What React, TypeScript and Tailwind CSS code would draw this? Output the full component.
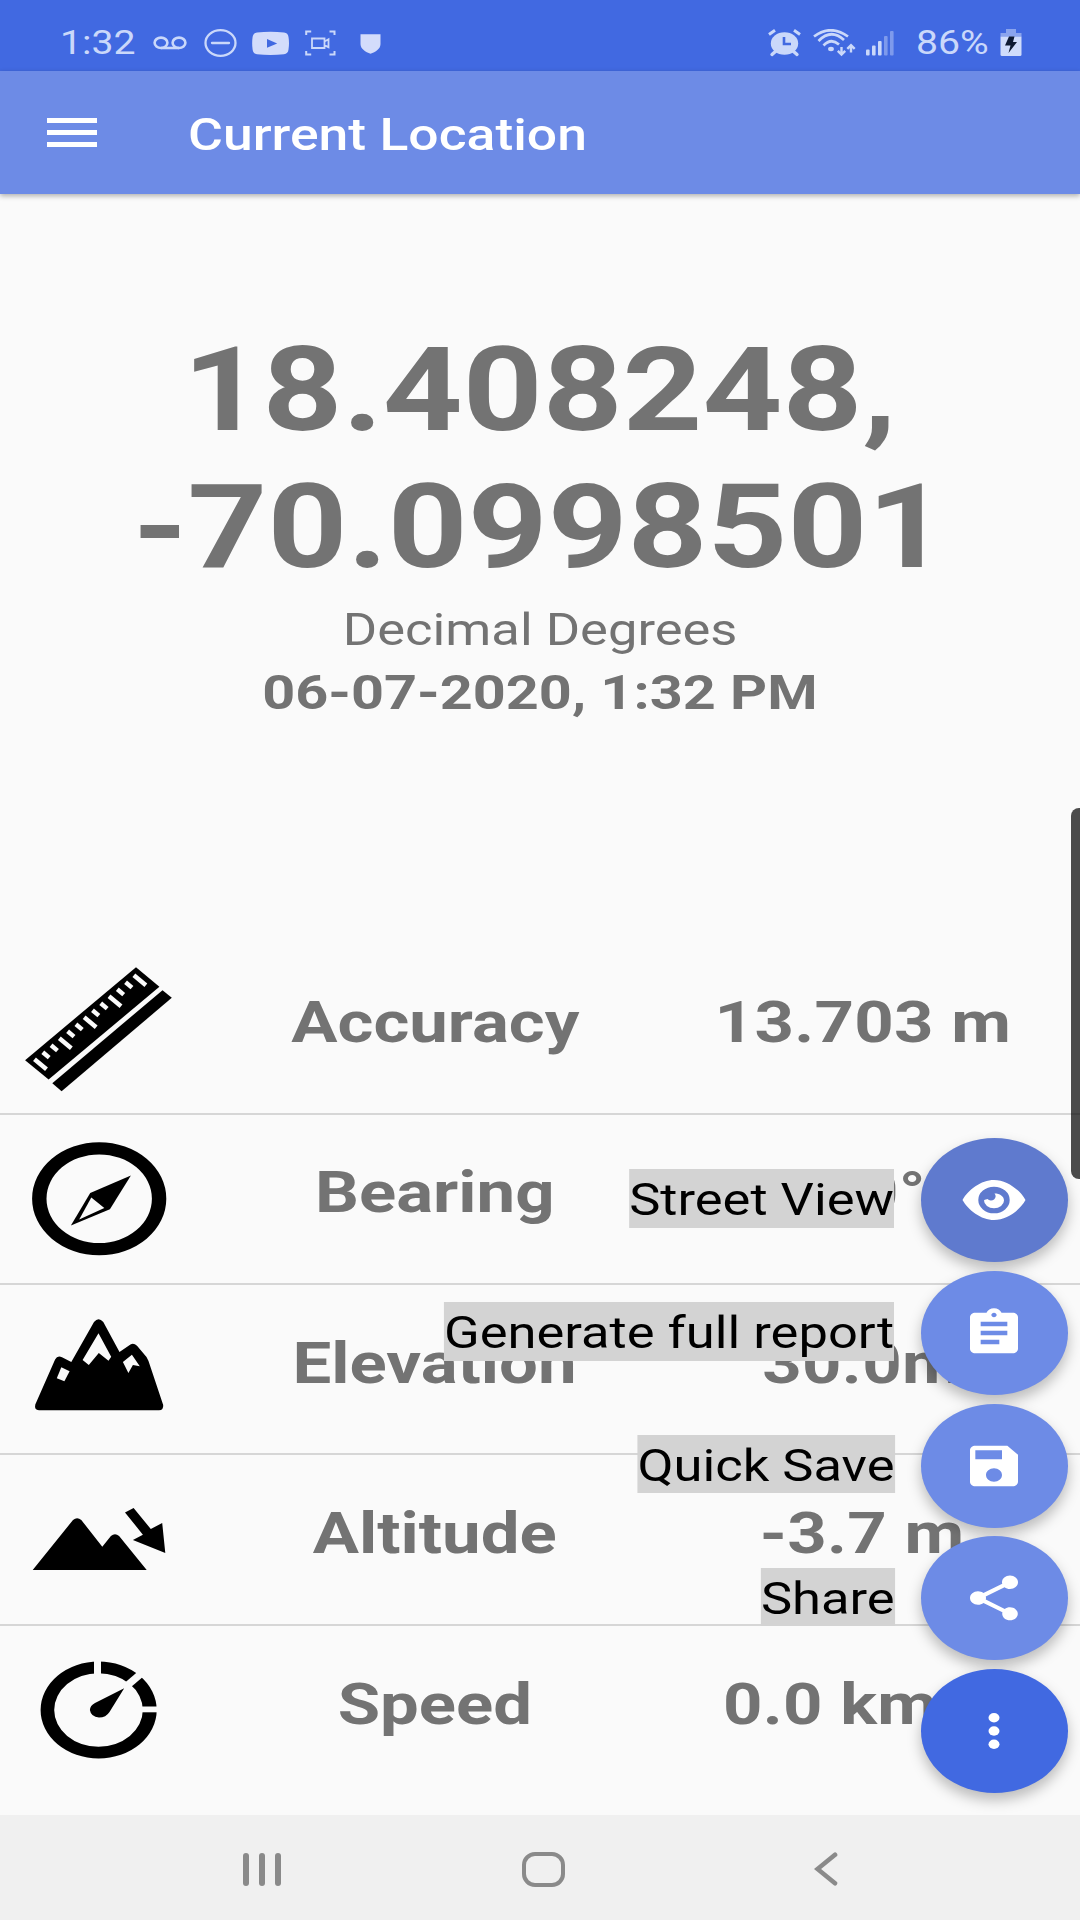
import React from 'react';

// Glyphs on this display are wider than they are tall, so text goes through Wide
const Wide: React.FC<{ children: React.ReactNode; className?: string }> = ({ children, className = '' }) => (
  <span className={`inline-block whitespace-nowrap scale-x-[1.1875] ${className}`}>{children}</span>
);

const StatusBar: React.FC = () => (
  <div className="h-[71px] bg-[#4169e1] flex items-center justify-between pt-[14px] pl-[60px] pr-[58px] text-[33px] leading-[39px] text-[#cad8fa]">
    <div className="flex items-center">
      <div className="w-[93px]">
        <Wide className="origin-left">1:32</Wide>
      </div>
      {/* Voicemail */}
      <svg className="w-[34px] h-7" viewBox="0 0 34 28" fill="none" stroke="currentColor" strokeWidth="2.6">
        <ellipse cx="8" cy="13.8" rx="6.4" ry="5.2" />
        <ellipse cx="26" cy="13.8" rx="6.4" ry="5.2" />
        <path d="M8 19h18" />
      </svg>
      {/* Do not disturb */}
      <svg className="ml-[17px] w-[33px] h-7" viewBox="0 0 33 28" fill="none" stroke="currentColor" strokeWidth="2.3">
        <ellipse cx="16.5" cy="14" rx="15" ry="12.8" />
        <path d="M8 14h17" strokeLinecap="round" />
      </svg>
      {/* Video */}
      <svg className="ml-[14.500px] w-[37px] h-7" viewBox="0 0 37 28">
        <path
          d="M5 3.6Q18.5 1.8 32 3.6Q36 4 36.5 8Q37.5 14 36.5 20.5Q36 24.8 32 25.2Q18.5 26.6 5 25.2Q1.2 24.8.6 20.5Q-.3 14 .6 8Q1.2 4 5 3.6Z"
          fill="#d3dcfb"
        />
        <path d="M15 10l10.2 4.4L15 18.8z" fill="#4169e1" />
      </svg>
      {/* Screen recorder */}
      <svg className="ml-[16.500px] w-[31px] h-7" viewBox="0 0 31 28" fill="none" stroke="currentColor" strokeWidth="2">
        <path d="M1.2 6V2.5h5M24.5 2.5h5V6M29.500 22v3.5h-5M6.2 25.5h-5V22" />
        <path d="M7 9.5h12.5v9.5H7zM19.5 12.5l4-2.2v8l-4-2.2" strokeWidth="1.8" />
      </svg>
      {/* Shield */}
      <svg className="ml-[24px] w-[21px] h-7" viewBox="0 0 21 28">
        <path d="M.5 5.2h20V15c0 5-5 8-10 9.8C5.5 23 .5 20 .5 15z" fill="#d3dcfb" />
      </svg>
    </div>

    <div className="flex items-center">
      {/* Alarm */}
      <svg className="w-[33px] h-7" viewBox="0 0 33 28" fill="none" stroke="currentColor">
        <ellipse cx="16.5" cy="14.5" rx="13.7" ry="11.2" fill="currentColor" stroke="none" />
        <path d="M1 5.5L7 1.3M32 5.5L26 1.3" strokeWidth="3" />
        <path d="M4 25.5l4-3.5M29 25.5l-4-3.5" strokeWidth="3.4" strokeLinecap="round" />
        <path d="M16 8v7h7" stroke="#4169e1" strokeWidth="2.6" />
      </svg>
      {/* Wifi */}
      <svg className="ml-[12px] w-[43px] h-7" viewBox="0 0 43 28" fill="none" stroke="currentColor" strokeWidth="2.7">
        <path d="M1 7.5Q17.500-5 35 7.5" />
        <path d="M5.5 12Q18-1 31 11" />
        <path d="M10.5 16.5Q18 8.5 26 15.5" />
        <ellipse cx="18" cy="20" rx="2.9" ry="2.2" fill="currentColor" stroke="none" />
        <path d="M28.5 18v7M24.8 21.8l3.7 3.7 3.7-3.7M38 23.5v-7M34.3 19.8l3.7-3.7 3.7 3.7" strokeWidth="2.4" />
      </svg>
      {/* Signal */}
      <svg className="ml-[10px] w-[28px] h-7" viewBox="0 0 28 28" fill="currentColor">
        <rect x="0" y="20.5" width="3.6" height="6" rx="1" />
        <rect x="6" y="16.5" width="3.6" height="10" rx="1" />
        <rect x="12" y="12" width="3.6" height="14.5" rx="1" />
        <rect x="18" y="7" width="3.6" height="19.5" rx="1" opacity=".45" />
        <rect x="24" y="2" width="3.6" height="24.5" rx="1" opacity=".45" />
      </svg>
      <div className="ml-[22px] w-[84px]">
        <Wide className="origin-left">86%</Wide>
      </div>
      {/* Battery */}
      <svg className="w-[22px] h-7" viewBox="0 0 22 28">
        <path d="M6 0h10v4h5.5v3.5H.5V4H6z" fill="#8aa4ee" />
        <path d="M.5 7.5h21V25.5q0 1.5-1.5 1.5H2q-1.5 0-1.5-1.5z" fill="#cfdcfb" />
        <path d="M9 7.5h5.5l-1.5 5.5h4L8.5 24l2-7.5H5z" fill="#0e1a33" />
      </svg>
    </div>
  </div>
);

const RulerIcon = () => (
  <svg className="w-[197px] h-[170px]" viewBox="0 0 197 170">
    <path d="M136 23.2L159.4 42.8L48.6 135.5L25.1 116.2Z" />
    <path d="M162.5 46.2L171.8 53.8L61.6 147.2L52.3 139.2Z" />
    {Array.from({ length: 13 }, (_, i) => {
      const x = 34.5 + i * 8.28;
      const y = 115.2 - i * 7;
      const long = i % 3 === 0;
      return (
        <line
          key={i}
          x1={x}
          y1={y}
          x2={x + (long ? 12 : 6.4)}
          y2={y + (long ? 10 : 5.4)}
          stroke="#fafafa"
          strokeWidth="4.4"
        />
      );
    })}
  </svg>
);

const CompassIcon = () => (
  <svg className="w-[197px] h-[170px]" viewBox="0 0 197 170">
    <path
      fillRule="evenodd"
      d="M32.1 84.7a67.1 56.5 0 1 0 134.2 0a67.1 56.5 0 1 0 -134.2 0zM46.5 84.7a52.7 44.3 0 1 1 105.4 0a52.7 44.3 0 1 1 -105.4 0z"
    />
    <path d="M130.9 61.5L109.9 95.2L70.9 111.5L90.2 78.9Z" />
    <path d="M91.3 83.5L104.3 93.9L79.2 105.5Z" fill="#fafafa" />
  </svg>
);

const MountainIcon = () => (
  <svg className="w-[197px] h-[170px]" viewBox="0 0 197 170">
    <path d="M35.3 120.5L55.1 75.5Q57.5 71 62 73.3L71.3 78L94 38Q98.5 32.5 103.3 38L119.5 68L129 61.5Q133 58 137 61.8L146.5 73L148.5 77L163.2 121Q163.6 126.3 159 126.3H39Q34 126 35.3 120.5Z" />
    <g fill="#fafafa">
      <path d="M98.5 49.3L111.2 72.7L108.5 76.7L98.8 69L88.8 81L82.6 76Z" />
      <path d="M131.9 70.7L139.8 82.3L132.9 81L128.4 89L122.9 78Z" />
      <path d="M61.3 83.3L69.6 87.3L64.4 97.3L56.8 94.3Z" />
    </g>
  </svg>
);

const AltitudeIcon = () => (
  <svg className="w-[197px] h-[170px]" viewBox="0 0 197 170">
    <path d="M32.7 116L73 66Q77.1 62.6 81.3 66L102.3 92.7L110.9 82Q115 78.6 119.1 82L146.7 116Z" />
    <path d="M125 58.4L133.6 54L150.8 75L162.2 69L165.3 99L132.9 86L142.9 80.7Z" />
  </svg>
);

const SpeedIcon = () => (
  <svg className="w-[197px] h-[170px]" viewBox="0 0 197 170">
    <path
      fillRule="evenodd"
      d="M40.6 85a58.05 48.5 0 1 0 116.1 0a58.05 48.5 0 1 0 -116.1 0zM54.2 85a44.3 36.7 0 1 1 88.6 0a44.3 36.7 0 1 1 -88.6 0z"
    />
    <g stroke="#fafafa">
      <path d="M97.5 34v17" strokeWidth="7" />
      <path d="M126 61.5L143 47" strokeWidth="7.4" />
      <path d="M139 84.4h20" strokeWidth="5.8" />
    </g>
    <path d="M124.2 63.3L109.5 87Q106 92.5 99 92.5Q91 92 89.9 85Q90 80.5 95 78Z" />
  </svg>
);

const rows: { label: string; value: string; icon: React.FC }[] = [
  { label: 'Accuracy', value: '13.703 m', icon: RulerIcon },
  { label: 'Bearing', value: '0.0°', icon: CompassIcon },
  { label: 'Elevation', value: '30.0m', icon: MountainIcon },
  { label: 'Altitude', value: '-3.7 m', icon: AltitudeIcon },
  { label: 'Speed', value: '0.0 km/h', icon: SpeedIcon },
];

const EyeIcon = () => (
  <svg className="w-16 h-[54px]" viewBox="0 0 64 54" fill="#fff">
    <path
      fillRule="evenodd"
      d="M.5 27C6 17 19 7 32 7s26 10 31.5 20C58 37 45 47 32 47S6 37 .5 27zM16.3 27a15.7 13.3 0 1 0 31.4 0a15.7 13.3 0 1 0 -31.4 0z"
    />
    <path d="M32.5 20.500a4 3.6 0 0 1 -7 5.5c-2.5.5-3.5 1-3.5 1.5a10 7.7 0 0 0 20 0c0-4.3-4.2-7-9.5-7z" />
  </svg>
);

const ReportIcon = () => (
  <svg className="w-16 h-[54px]" viewBox="0 0 24 24" preserveAspectRatio="none" fill="#fff">
    <path d="M19 3h-4.18C14.4 1.84 13.3 1 12 1c-1.3 0-2.4.84-2.82 2H5c-1.1 0-2 .9-2 2v14c0 1.1.9 2 2 2h14c1.1 0 2-.9 2-2V5c0-1.1-.9-2-2-2zm-7 0c.55 0 1 .45 1 1s-.45 1-1 1-1-.45-1-1 .45-1 1-1zm2 14H7v-2h7v2zm3-4H7v-2h10v2zm0-4H7V7h10v2z" />
  </svg>
);

const SaveIcon = () => (
  <svg className="w-16 h-[54px]" viewBox="0 0 24 24" preserveAspectRatio="none" fill="#fff">
    <path d="M17 3H5c-1.11 0-2 .9-2 2v14c0 1.1.89 2 2 2h14c1.1 0 2-.9 2-2V7l-4-4zm-5 16c-1.66 0-3-1.34-3-3s1.34-3 3-3 3 1.34 3 3-1.34 3-3 3zm3-10H5V5h10v4z" />
  </svg>
);

const ShareIcon = () => (
  <svg className="w-16 h-[54px]" viewBox="0 0 24 24" preserveAspectRatio="none" fill="#fff">
    <path d="M18 16.08c-.76 0-1.44.3-1.96.77L8.91 12.7c.05-.23.09-.46.09-.7s-.04-.47-.09-.7l7.05-4.11c.54.5 1.25.81 2.04.81 1.66 0 3-1.34 3-3s-1.34-3-3-3-3 1.34-3 3c0 .24.04.47.09.7L8.04 9.81C7.5 9.31 6.79 9 6 9c-1.66 0-3 1.34-3 3s1.34 3 3 3c.79 0 1.5-.31 2.04-.81l7.12 4.16c-.05.21-.08.43-.08.65 0 1.61 1.31 2.92 2.92 2.92 1.61 0 2.92-1.31 2.92-2.92s-1.31-2.92-2.92-2.92z" />
  </svg>
);

const MoreIcon = () => (
  <svg className="w-16 h-[54px]" viewBox="0 0 64 54" fill="#fff">
    <ellipse cx="32" cy="13.7" rx="5.5" ry="4.7" />
    <ellipse cx="32" cy="27" rx="5.5" ry="4.7" />
    <ellipse cx="32" cy="40.3" rx="5.5" ry="4.7" />
  </svg>
);

const actions: { label?: string; color: string; icon: React.FC }[] = [
  { label: 'Street View', color: 'bg-[#5f7ace]', icon: EyeIcon },
  { label: 'Generate full report', color: 'bg-[#6d8be6]', icon: ReportIcon },
  { label: 'Quick Save', color: 'bg-[#6d8be6]', icon: SaveIcon },
  { label: 'Share', color: 'bg-[#6d8be6]', icon: ShareIcon },
  { color: 'bg-[#4169e1]', icon: MoreIcon },
];

const App: React.FC = () => {
  return (
    <div className="relative w-[1080px] h-[1920px] overflow-hidden flex flex-col bg-[#fafafa] text-[#737373] font-[Roboto,sans-serif]">
      <StatusBar />

      {/* App bar */}
      <header className="h-[123px] shrink-0 bg-[#6d8be6] flex items-center pl-[47px] shadow-[0_2px_5px_rgba(0,0,0,0.3)]">
        <button className="w-[50px] flex flex-col gap-[7.5px]">
          <span className="h-[4.7px] w-full bg-white" />
          <span className="h-[4.7px] w-full bg-white" />
          <span className="h-[4.7px] w-full bg-white" />
        </button>
        <h1 className="ml-[91px] pt-[5px] text-[44.2px] leading-[52px] font-medium text-white">
          <span className="inline-block whitespace-nowrap origin-left scale-x-[1.21]">Current Location</span>
        </h1>
      </header>

      {/* Coordinates */}
      <section className="h-[750.5px] shrink-0 pt-[128px] flex flex-col items-center">
        <p className="text-[117.3px] leading-[137px] font-bold text-center">
          <Wide>18.408248,</Wide>
          <br />
          <Wide>-70.0998501</Wide>
        </p>
        <p className="mt-[8px] text-[44.2px] leading-[52px]">
          <Wide>Decimal Degrees</Wide>
        </p>
        <p className="mt-[8px] text-[48.5px] leading-[57px] font-bold">
          <Wide>06-07-2020, 1:32 PM</Wide>
        </p>
      </section>

      {/* Readings */}
      <ul className="flex-1 text-[58px] leading-[68px] font-bold">
        {rows.map(({ label, value, icon: Icon }) => (
          <li
            key={label}
            className="h-[170.25px] grid grid-cols-[197px_476px_379px] items-center border-b-2 border-[#d6d6d6] last:border-b-0"
          >
            <div className="h-[170px] -mt-px text-black self-start">
              <Icon />
            </div>
            <div className="text-center pb-3.5">
              <Wide>{label}</Wide>
            </div>
            <div className="text-center pb-3.5 tracking-[0.25px]">
              <Wide>{value}</Wide>
            </div>
          </li>
        ))}
      </ul>

      {/* Navigation bar */}
      <nav className="h-[105px] shrink-0 bg-[#f0f0f0] flex items-center pl-[243px] pt-[3px] text-[#8a8a8a]">
        <div className="flex gap-[10px]">
          <span className="w-1.5 h-[33px] rounded-sm bg-current" />
          <span className="w-1.5 h-[33px] rounded-sm bg-current" />
          <span className="w-1.5 h-[33px] rounded-sm bg-current" />
        </div>
        <span className="ml-[241px] w-[43px] h-[35px] rounded-[13px] border-4 border-current" />
        <svg className="ml-[248.500px] w-6 h-[34px]" viewBox="0 0 24 34" fill="none" stroke="currentColor" strokeWidth="4.6">
          <path d="M21 2.8L3.5 17L21 31.2" strokeLinecap="round" />
        </svg>
      </nav>

      {/* Edge panel handle */}
      <div className="absolute right-0 top-[807.5px] w-[9px] h-[371px] rounded-l-lg bg-black/70" />

      {/* Floating actions */}
      <div className="absolute right-[12px] top-[1138px] flex flex-col items-end gap-[8.8px]">
        {actions.map(({ label, color, icon: Icon }) => (
          <div key={label || 'more'} className="flex items-center">
            {label && (
              <Wide className="origin-right mr-[26px] mb-[3px] h-[58.6px] bg-[#d3d3d3] text-black text-[44.2px] leading-[62px]">
                {label}
              </Wide>
            )}
            <button
              className={`w-[147.5px] h-[124px] rounded-[50%] flex items-center justify-center shadow-[0_7px_14px_rgba(0,0,0,0.26)] ${color}`}
            >
              <Icon />
            </button>
          </div>
        ))}
      </div>
    </div>
  );
};

export default App;
